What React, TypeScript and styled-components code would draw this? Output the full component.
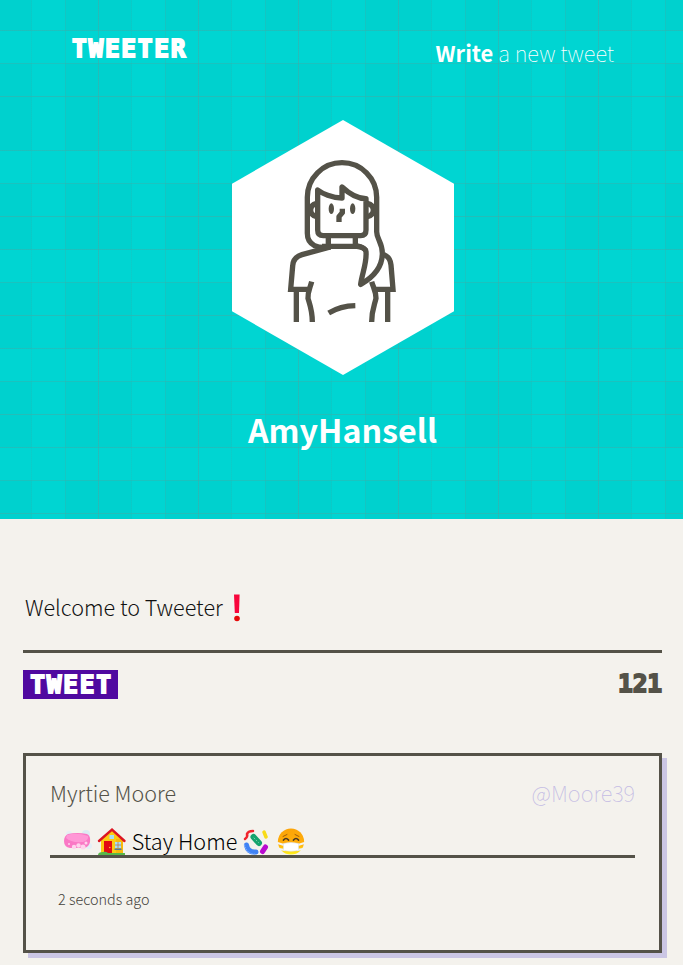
import React from 'react';
import styled, { createGlobalStyle } from 'styled-components';

const ink = '#545248';
const sans = '"Noto Sans CJK SC", sans-serif';
const display = '"DejaVu Sans Mono", monospace';

const GlobalStyle = createGlobalStyle`
  * { box-sizing: border-box; }
  body { margin: 0; background: #f4f2ed; font-family: ${sans}; font-weight: 300; }
`;

const lattice = `
  background-color: #00d1ce;
  background-image:
    linear-gradient(90deg, transparent 31px, rgba(30,190,187,.35) 31px, rgba(30,190,187,.35) 32px, transparent 32px, transparent 65px, rgba(50,180,175,.4) 65px, rgba(50,180,175,.4) 66px, transparent 66px, transparent 98px, rgba(70,170,165,.55) 98px, rgba(70,170,165,.55) 99px, transparent 99px),
    linear-gradient(180deg, transparent 30px, rgba(60,175,170,.5) 30px, rgba(60,175,170,.5) 31px, transparent 31px, transparent 63px, rgba(60,175,170,.45) 63px, rgba(60,175,170,.45) 64px, transparent 64px, transparent 96px, rgba(60,175,170,.6) 96px, rgba(60,175,170,.6) 97px, transparent 97px),
    linear-gradient(90deg, transparent 32px, #00d5d2 32px, #00d5d2 65px, transparent 65px),
    linear-gradient(180deg, transparent 31px, #00d5d2 31px, #00d5d2 63px, transparent 63px);
  background-size: 100px 99px;
`;

const Nav = styled.nav`
  ${lattice}
  height: 120px;
  padding: 32px 69px 0 72px;
  display: flex;
  justify-content: space-between;
  color: #fff;
`;

const Display = styled.span`
  font: 700 24.5px/33px ${display};
  letter-spacing: 1.7px;
  color: #fff;
  -webkit-text-stroke: 1.8px currentColor;
`;

const Counter = styled(Display)`
  color: ${ink};
  line-height: 28px;
  letter-spacing: -0.1px;
`;

const Compose = styled.span`
  font-size: 21.9px;
  line-height: 44px;
  margin-top: -1px;
  font-weight: 100;
  white-space: nowrap;
  b { font-weight: 700; }
`;

const Profile = styled.header`
  ${lattice}
  height: 399px;
  display: flex;
  flex-direction: column;
  align-items: center;
  padding-left: 3px;
`;

const Hexagon = styled.div`
  width: 222px;
  height: 255px;
  background: #fff;
  clip-path: polygon(50% 0, 100% 25%, 100% 75%, 50% 100%, 0 75%, 0 25%);
  svg { display: block; width: 100%; height: 100%; }
`;

const Name = styled.h2`
  margin: 28px 1px 0 0;
  font-size: 32.2px;
  line-height: 52px;
  font-weight: 700;
  color: #fff;
`;

const Main = styled.main`
  padding: 67px 21px 12px 23px;
`;

const Draft = styled.div`
  display: flex;
  height: 67px;
  padding-left: 2px;
  border-bottom: 3px solid ${ink};
  font-size: 21.6px;
  line-height: 42px;
  color: #111;
`;

const Controls = styled.div`
  display: flex;
  justify-content: space-between;
  align-items: flex-start;
  padding-top: 17px;
  height: 100px;
`;

const TweetButton = styled.button`
  border: 0;
  background: #5009a0;
  height: 29px;
  width: 95px;
  padding: 0 0 0 2px;
  display: flex;
  align-items: center;
  justify-content: center;
`;

const Card = styled.article`
  height: 200px;
  border: 3px solid ${ink};
  box-shadow: 5px 5px 0 #cbc6e4;
  padding: 16px 24px;
`;

const CardHead = styled.div`
  display: flex;
  justify-content: space-between;
  font-size: 21.5px;
  line-height: 42px;
  color: ${ink};
`;

const Handle = styled.span`
  font-size: 21.9px;
  font-weight: 100;
  color: #c4bce4;
`;

const Message = styled.p`
  display: flex;
  margin: 0;
  height: 44px;
  padding: 6px 0 0 12px;
  border-bottom: 3px solid ${ink};
  font-size: 21.6px;
  line-height: 42px;
  white-space: pre;
  color: #000;
`;

const Emoji = styled.svg<{ $left?: number }>`
  flex: none;
  width: 30px;
  height: 30px;
  margin: 7px 0 0 ${(p) => p.$left ?? 0}px;
`;

const Time = styled.div`
  padding: 28px 0 0 8px;
  font-size: 14.4px;
  line-height: 26px;
  color: #44423b;
`;

const Avatar = () => (
  <svg viewBox="31 30 664 765" fill="none" stroke={ink} strokeWidth="16" strokeLinejoin="round">
    <path d="M325 411C290 416 256 408 256 370V262A104 104 0 0 1 464 262V365C464 388 481 397 481 430C481 475 448 505 416 523C420 490 435 460 432 425C430 410 405 408 400 406" />
    <path d="M287 240V360Q287 377 304 377H416Q432 377 432 360V266C400 266 375 245 360 231V264C330 264 300 250 287 240Z" />
    <path d="M284 280C260 286 260 314 284 320M436 280C460 286 460 314 436 320" />
    <g fill={ink} stroke="none"><ellipse cx="328" cy="296" rx="8" ry="16" /><ellipse cx="392" cy="296" rx="8" ry="16" /></g>
    <path d="M361 296V308L351 320V336M319 380V408M400 380V408M300 409H405Q425 411 432 422" />
    <path d="M325 411L240 434Q213 442 212 468L206 538H262M486 434Q505 442 507 465L513 538H462" strokeLinejoin="miter" />
    <path d="M223 545V636M497 545V636M269 515C264 535 257 545 258 565C262 580 271 600 271 636M449 515C455 535 462 545 462 565C458 585 449 600 449 636M320 609Q355 588 400 587" />
  </svg>
);

const Exclamation = () => (
  <Emoji viewBox="0 0 30 30" $left={0}>
    <path d="M11 1.5H16.6L16 20H11.8Z" fill="#f8063c" />
    <circle cx="14" cy="25.5" r="2.8" fill="#e60909" />
  </Emoji>
);

const Soap = () => (
  <Emoji viewBox="0 0 30 30" $left={1}>
    <circle cx="6" cy="7" r="3" fill="#e6f0f4" />
    <circle cx="23" cy="7" r="4" fill="#dcebf3" />
    <circle cx="26" cy="19" r="3" fill="#e3f0f6" />
    <path d="M5 7Q14 5 24 7Q28 9 27 15Q26 20 21 21H7Q1 20 1 14Q1 9 5 7Z" fill="#fa78c5" />
    <path d="M4 8Q14 5 25 9Q26 13 20 15Q8 16 3 11Z" fill="#ff97d6" />
    <g fill="#ffd2ec"><circle cx="11" cy="20" r="2.2" /><circle cx="15.5" cy="18.5" r="2.2" /><circle cx="20" cy="20" r="2.5" /><circle cx="6" cy="17" r="1" /><circle cx="23" cy="16" r="1.5" /></g>
  </Emoji>
);

const House = () => (
  <Emoji viewBox="0 0 30 30" $left={4}>
    <path d="M4 12L15 3L26 12V27H4Z" fill="#fccb12" />
    <path d="M19 12H26V27H19Z" fill="#f8b90c" />
    <path d="M2 14L15 2.5L27.5 14" fill="none" stroke="#dc1522" strokeWidth="2.4" strokeLinecap="round" />
    <path d="M7 14H15V26H7Z" fill="#e20a12" />
    <path d="M12.5 8H17V12H12.5ZM18 15H24V21H18Z" fill="#a7dff5" />
    <path d="M21 15V21M18 18H24" stroke="#ba7750" strokeWidth=".8" />
    <path d="M17.5 21.5H24.5V23H17.5Z" fill="#52769c" />
    <path d="M1 28Q1 25 6 25Q9 24 11 26H28V28Z" fill="#59b84a" />
    <circle cx="12.8" cy="20.5" r=".7" fill="#ffd346" />
  </Emoji>
);

const Microbes = () => (
  <Emoji viewBox="0 0 30 30" $left={6}>
    <g fill="none" strokeLinecap="round">
      <path d="M2 12Q5 10 4 7Q5 4 10 4" stroke="#f0242d" strokeWidth="2.5" />
      <path d="M10.5 10L16 16" stroke="#15a36e" strokeWidth="6" />
      <path d="M11 11L15.5 15.5" stroke="#7ad0a5" strokeWidth="1" strokeDasharray="1 2" />
      <path d="M3.5 18Q5 26 13 25" stroke="#3f82f4" strokeWidth="5" />
      <path d="M1.5 18Q4 28 13 27" stroke="#75a8ff" strokeWidth="1.4" strokeDasharray=".4 2" />
      <path d="M21 5L23 10" stroke="#f8db17" strokeWidth="3.5" />
      <path d="M22.5 20L19.5 24.5" stroke="#b90bd0" strokeWidth="5" />
    </g>
  </Emoji>
);

const Mask = () => (
  <Emoji viewBox="0 0 30 30" $left={3}>
    <defs>
      <linearGradient id="skin" x1="0" y1="0" x2="0" y2="1">
        <stop stopColor="#fca407" /><stop offset=".6" stopColor="#ffae0b" /><stop offset="1" stopColor="#fff21a" />
      </linearGradient>
    </defs>
    <circle cx="15" cy="14.5" r="13.1" fill="url(#skin)" />
    <path d="M1.5 16L8 18M28.5 16L22 18M3 22L9 23M27 22L21 23" stroke="#f2f5f7" strokeWidth="2" />
    <path d="M7.5 16.5Q15 14.5 22.5 16.5V23.5Q15 25 7.5 23.5Z" fill="#fff" stroke="#dce3e7" strokeWidth=".6" />
    <path d="M7.5 13Q10 10 12.5 13M17.5 13Q20 10 22.5 13" fill="none" stroke="#493724" strokeWidth="1.7" strokeLinecap="round" />
    <path d="M7 9.5L11 7.5M23 9.5L19 7.5" stroke="#a35d07" strokeWidth="1" strokeLinecap="round" />
  </Emoji>
);

export default function App() {
  return (
    <>
      <GlobalStyle />
      <Nav>
        <Display>TWEETER</Display>
        <Compose><b>Write</b> a new tweet</Compose>
      </Nav>
      <Profile>
        <Hexagon><Avatar /></Hexagon>
        <Name>AmyHansell</Name>
      </Profile>
      <Main>
        <Draft>Welcome to Tweeter<Exclamation /></Draft>
        <Controls>
          <TweetButton><Display>TWEET</Display></TweetButton>
          <Counter>121</Counter>
        </Controls>
        <Card>
          <CardHead><span>Myrtie Moore</span><Handle>@Moore39</Handle></CardHead>
          <Message><Soap /><House /> Stay Home<Microbes /><Mask /></Message>
          <Time>2 seconds ago</Time>
        </Card>
      </Main>
    </>
  );
}
